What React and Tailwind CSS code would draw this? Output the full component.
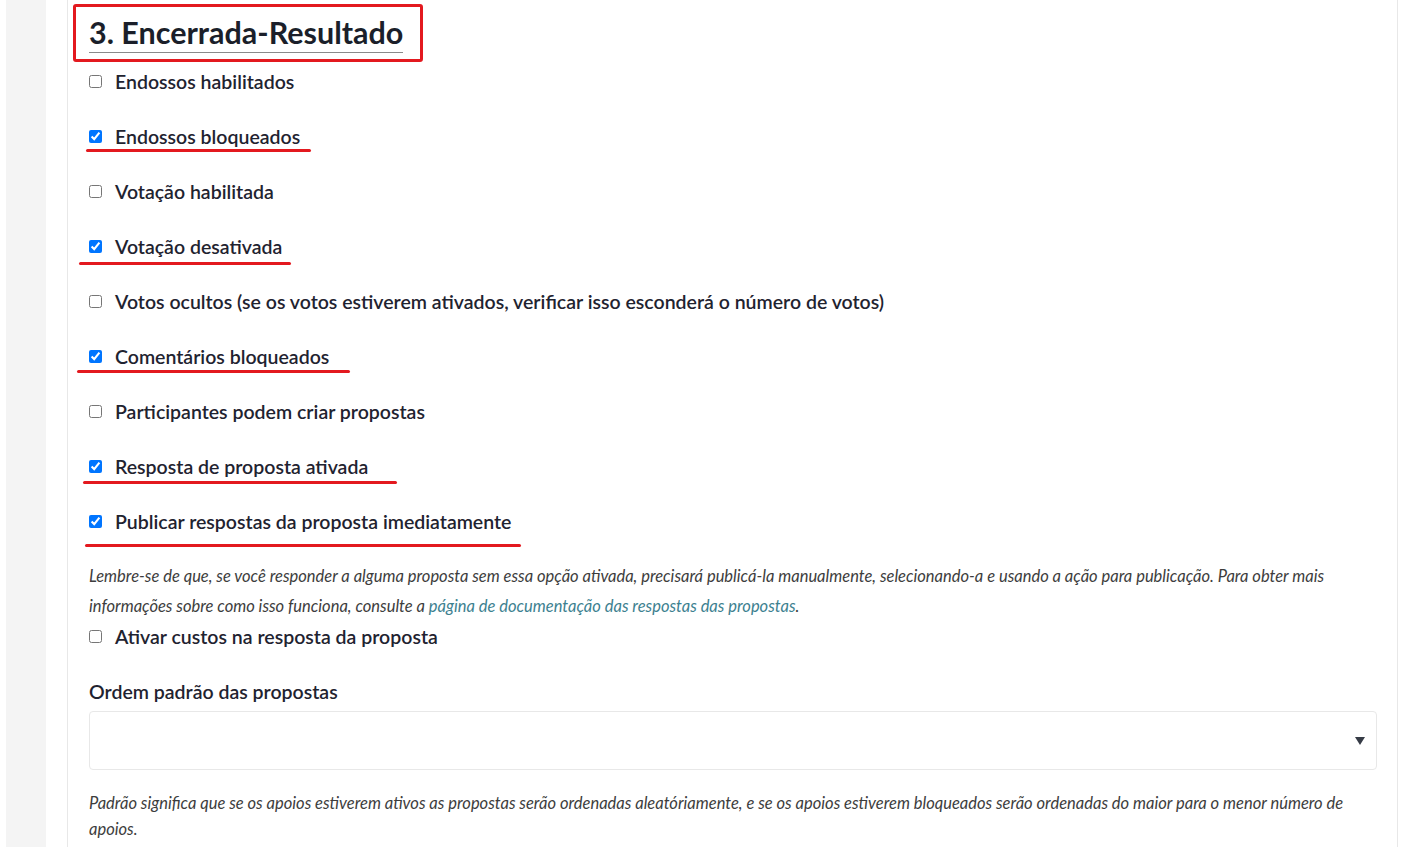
const options = [
  { label: "Endossos habilitados", checked: false },
  { label: "Endossos bloqueados", checked: true, mark: "left-[-3px] w-[225px] top-[26px]" },
  { label: "Votação habilitada", checked: false },
  { label: "Votação desativada", checked: true, mark: "left-[-10px] w-[212px] top-[29px]" },
  { label: "Votos ocultos (se os votos estiverem ativados, verificar isso esconderá o número de votos)", checked: false },
  { label: "Comentários bloqueados", checked: true, mark: "left-[-12px] w-[273px] top-[27px]" },
  { label: "Participantes podem criar propostas", checked: false },
  { label: "Resposta de proposta ativada", checked: true, mark: "left-[-6px] w-[314px] top-[28px]" },
  { label: "Publicar respostas da proposta imediatamente", checked: true, mark: "left-[-4px] w-[436px] top-[36px]" },
];

const Option = ({ label, checked, mark, last }) => (
  <div className={"relative flex items-center h-[27px] " + (last ? "mb-[26px]" : "mb-[28px]")}>
    <input
      type="checkbox"
      defaultChecked={checked}
      className="w-[13px] h-[13px] m-0 accent-[#0075ff]"
    />
    <span className="ml-[13px] text-[19.5px] font-semibold text-[#1f2330]">{label}</span>
    {mark && (
      <div className={"absolute h-[3px] rounded-full bg-[#e3191f] " + mark} />
    )}
  </div>
);

export default function App() {
  return (
    <div
      className="flex min-h-[847px] bg-white text-[#1f2330]"
      style={{ fontFamily: "Lato, 'Open Sans', sans-serif" }}
    >
      <div className="w-[6px] shrink-0" />
      <div className="w-[40px] shrink-0 bg-[#f4f4f4]" />
      <div className="w-[21px] shrink-0" />
      <div className="w-[1331px] shrink-0 border-l border-r border-[#e8e8e8] pl-[21px] pr-[20px]">
        <div className="pt-[4px] pb-[6px]">
          <div className="inline-block -ml-[16px] border-[3px] border-[#e3191f] rounded-[3px] pl-[13px] pr-[17px] pt-[8px] pb-[6px]">
            <h2 className="text-[30.5px] font-bold leading-[34px] text-[#1b1f2a] border-b border-[#8a8a8a] pb-[3px]">
              3. Encerrada-Resultado
            </h2>
          </div>
        </div>
        {options.map((o, i) => (
          <Option key={i} {...o} last={i === options.length - 1} />
        ))}
        <p className="italic text-[16.5px] leading-[30px] text-[#3d3d3d]">
          Lembre-se de que, se você responder a alguma proposta sem essa opção ativada, precisará publicá-la manualmente, selecionando-a e usando a ação para publicação. Para obter mais informações sobre como isso funciona, consulte a{" "}
          <a className="text-[#3d8190]">página de documentação das respostas das propostas</a>.
        </p>
        <div className="flex items-center h-[27px] mt-[2px]">
          <input type="checkbox" className="w-[13px] h-[13px] m-0 accent-[#0075ff]" />
          <span className="ml-[13px] text-[19.5px] font-semibold">Ativar custos na resposta da proposta</span>
        </div>
        <div className="mt-[28px] text-[19.5px] font-semibold h-[27px] flex items-center">
          Ordem padrão das propostas
        </div>
        <div className="mt-[6px] h-[59px] border border-[#e8e8e8] rounded-[4px] flex items-center justify-end pr-[11px]">
          <svg width="10" height="8" viewBox="0 0 10 8">
            <path d="M0 0 H10 L5 8 Z" fill="#363b46" />
          </svg>
        </div>
        <p className="mt-[20px] italic text-[16.5px] leading-[26px] text-[#3d3d3d]">
          Padrão significa que se os apoios estiverem ativos as propostas serão ordenadas aleatóriamente, e se os apoios estiverem bloqueados serão ordenadas do maior para o menor número de apoios.
        </p>
      </div>
    </div>
  );
}
